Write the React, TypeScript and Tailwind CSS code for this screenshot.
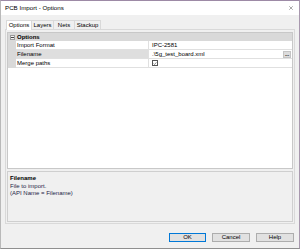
import { X } from 'lucide-react';

const tabs = ['Options', 'Layers', 'Nets', 'Stackup'];

interface Row {
  name: string;
  value: string;
  kind: 'text' | 'file' | 'check';
}

const rows: Row[] = [
  { name: 'Import Format', value: 'IPC-2581', kind: 'text' },
  { name: 'Filename', value: '.\\5g_test_board.xml', kind: 'file' },
  { name: 'Merge paths', value: '', kind: 'check' },
];

export default function App() {
  return (
    <div
      className="w-[300px] h-[249px] bg-[#f0f0f0] flex flex-col border-t border-t-[#9d8aa6] border-r border-r-[#a898ae] border-b border-b-[#8f8f8f] border-l border-l-[#b9b9b9] text-[6px] text-black overflow-hidden"
      style={{ fontFamily: '"Liberation Sans", Arial, sans-serif' }}
    >
      {/* Title bar */}
      <div className="h-[14px] bg-white flex items-center justify-between pl-[4px] pr-[5px] shrink-0">
        <span className="text-[6.2px]">PCB Import - Options</span>
        <X className="w-[6px] h-[6px] text-[#555]" strokeWidth={2} />
      </div>

      {/* Tabs */}
      <div className="flex px-[5px] pt-[4px] h-[14px] shrink-0 items-end">
        {tabs.map((t, i) => (
          <div
            key={t}
            className={
              i === 0
                ? 'h-[10px] px-[2px] w-[26px] bg-white border border-[#d9d9d9] border-b-0 flex items-center justify-center relative z-10 -mb-px'
                : 'h-[9px] bg-[#f0f0f0] border border-[#d9d9d9] border-l-0 border-b-0 flex items-center justify-center ' +
                  (i === 1 ? 'w-[22px]' : i === 2 ? 'w-[21px]' : 'w-[26px]')
            }
          >
            {t}
          </div>
        ))}
      </div>

      {/* Tab panel */}
      <div className="mx-[4px] h-[195px] border border-[#d9d9d9] bg-[#f0f0f0] flex flex-col gap-[2px] p-[1px] pt-[2px] shrink-0">
        {/* Property grid */}
        <div className="h-[137px] bg-white border border-[#c8c8c8] flex flex-col shrink-0">
          <div className="h-[8px] bg-[#d9d9d9] flex items-center font-bold">
            <div className="w-[8px] flex items-center justify-center">
              <span className="w-[5px] h-[5px] border border-[#9a9a9a] bg-[#f4f4f4] flex items-center justify-center">
                <span className="w-[3px] h-px bg-[#444]" />
              </span>
            </div>
            <span className="pl-[1px]">Options</span>
          </div>
          {rows.map((r) => (
            <div key={r.name} className="h-[9px] flex">
              <div className="w-[8px] bg-[#d9d9d9] shrink-0" />
              <div
                className={
                  'w-[133px] pl-[1px] flex items-center border-b border-r border-[#e0e0e0] shrink-0 ' +
                  (r.kind === 'file' ? 'bg-[#dedede]' : 'bg-white')
                }
              >
                {r.name}
              </div>
              <div className="flex-1 flex items-center pl-[3px] border-b border-[#e0e0e0] relative">
                {r.kind === 'check' ? (
                  <span className="w-[6px] h-[6px] border border-[#555] bg-white flex items-center justify-center">
                    <svg viewBox="0 0 6 6" className="w-[5px] h-[5px]">
                      <path d="M0.8 3 L2.4 4.5 L5.2 1.2" fill="none" stroke="#333" strokeWidth="0.8" />
                    </svg>
                  </span>
                ) : (
                  <span>{r.value}</span>
                )}
                {r.kind === 'file' && (
                  <span className="absolute right-[1px] top-[1px] w-[8px] h-[7px] bg-[#dcdcdc] border border-[#c4c4c4] flex items-end justify-center text-[5px] leading-[5px] font-bold">
                    ...
                  </span>
                )}
              </div>
            </div>
          ))}
        </div>

        {/* Description */}
        <div className="flex-1 border border-[#cfcfcf] bg-[#f0f0f0] px-[2px] pt-[3px] leading-[7.5px]">
          <div className="font-bold">Filename</div>
          <div className="text-[#1e2446]">File to import.</div>
          <div className="text-[#1e2446]">(API Name = Filename)</div>
        </div>
      </div>

      {/* Buttons */}
      <div className="flex justify-end gap-[6px] pr-[5px] pt-[9px]">
        <button className="w-[37px] h-[9px] bg-[#e1e1e1] border border-[#0078d7] flex items-center justify-center text-[6px]">
          OK
        </button>
        <button className="w-[38px] h-[9px] bg-[#e1e1e1] border border-[#adadad] flex items-center justify-center text-[6px]">
          Cancel
        </button>
        <button className="w-[38px] h-[9px] bg-[#e1e1e1] border border-[#adadad] flex items-center justify-center text-[6px]">
          Help
        </button>
      </div>
    </div>
  );
}
